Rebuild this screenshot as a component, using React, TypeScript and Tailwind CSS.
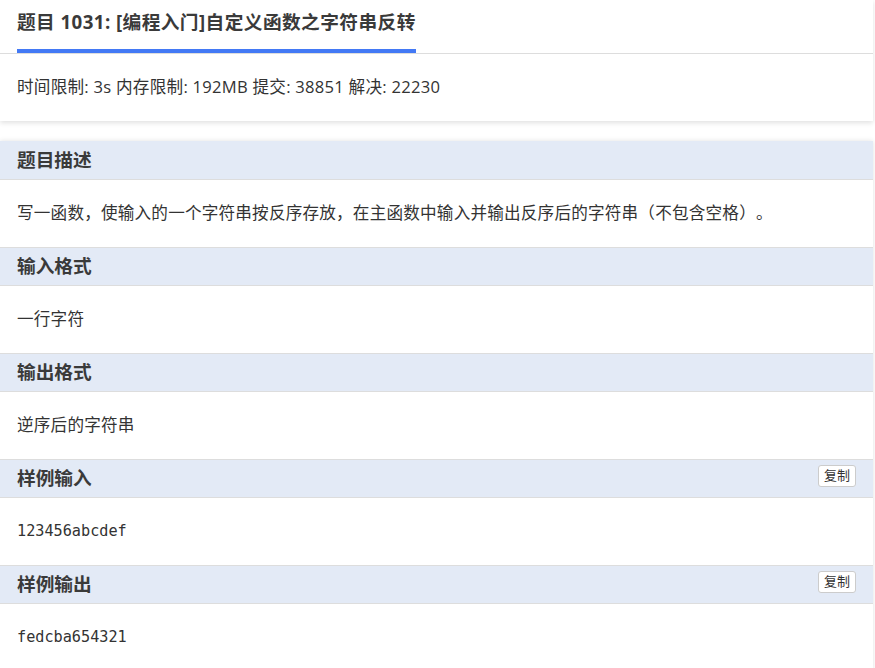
const sections = [
  { title: '题目描述', body: '写一函数，使输入的一个字符串按反序存放，在主函数中输入并输出反序后的字符串（不包含空格）。' },
  { title: '输入格式', body: '一行字符' },
  { title: '输出格式', body: '逆序后的字符串' },
  { title: '样例输入', body: '123456abcdef', code: true },
  { title: '样例输出', body: 'fedcba654321', code: true },
]

const sans = "font-['Open_Sans','Noto_Sans_CJK_SC',sans-serif]"

export default function App() {
  return (
    <div className={`min-h-[668px] w-[875px] overflow-hidden bg-white text-[#333] ${sans}`}>
      {/* 题目头部 */}
      <div className="w-[873px] bg-white shadow-[0_2px_5px_rgba(0,0,0,0.12)]">
        <div className="h-[54px] border-b border-[#dddddd] px-[17px]">
          <div className="inline-block h-[53px] border-b-4 border-[#4379f5] pt-[8px]">
            <h1 className="text-[18.7px] font-bold leading-[28px] tracking-[0.42px] text-[#3a3a3a]">
              题目 1031: [编程入门]自定义函数之字符串反转
            </h1>
          </div>
        </div>
        <div className="flex h-[67px] items-center px-[17px] text-[16.6px] tracking-[0.25px]">
          时间限制: 3s 内存限制: 192MB 提交: 38851 解决: 22230
        </div>
      </div>

      {/* 题目内容 */}
      <div className="mt-[20px] w-[873px] bg-white shadow-[0_0_5px_rgba(0,0,0,0.12)]">
        {sections.map((s, i) => (
          <div key={s.title}>
            <div
              className={`flex h-[39px] items-center justify-between border-b border-[#dddddd] bg-[#e3eaf6] px-[17px] ${
                i === 0 ? 'border-t border-t-[#e3eaf6]' : 'border-t'
              }`}
            >
              <h2 className="text-[18.7px] font-bold text-[#3a3a3a]">{s.title}</h2>
              {s.code && (
                <button className="mb-[5px] flex h-[22px] w-[38px] items-center justify-center rounded-[3px] border border-[#cccccc] bg-white text-[13px] text-[#333]">
                  复制
                </button>
              )}
            </div>
            <div className="flex h-[67px] items-center px-[17px]">
              {s.code ? (
                <pre className="font-['DejaVu_Sans_Mono',monospace] text-[15.2px] text-[#333]">{s.body}</pre>
              ) : (
                <p className="text-[16.6px] tracking-[0.2px] [text-spacing-trim:space-all]">{s.body}</p>
              )}
            </div>
          </div>
        ))}
      </div>
    </div>
  )
}
